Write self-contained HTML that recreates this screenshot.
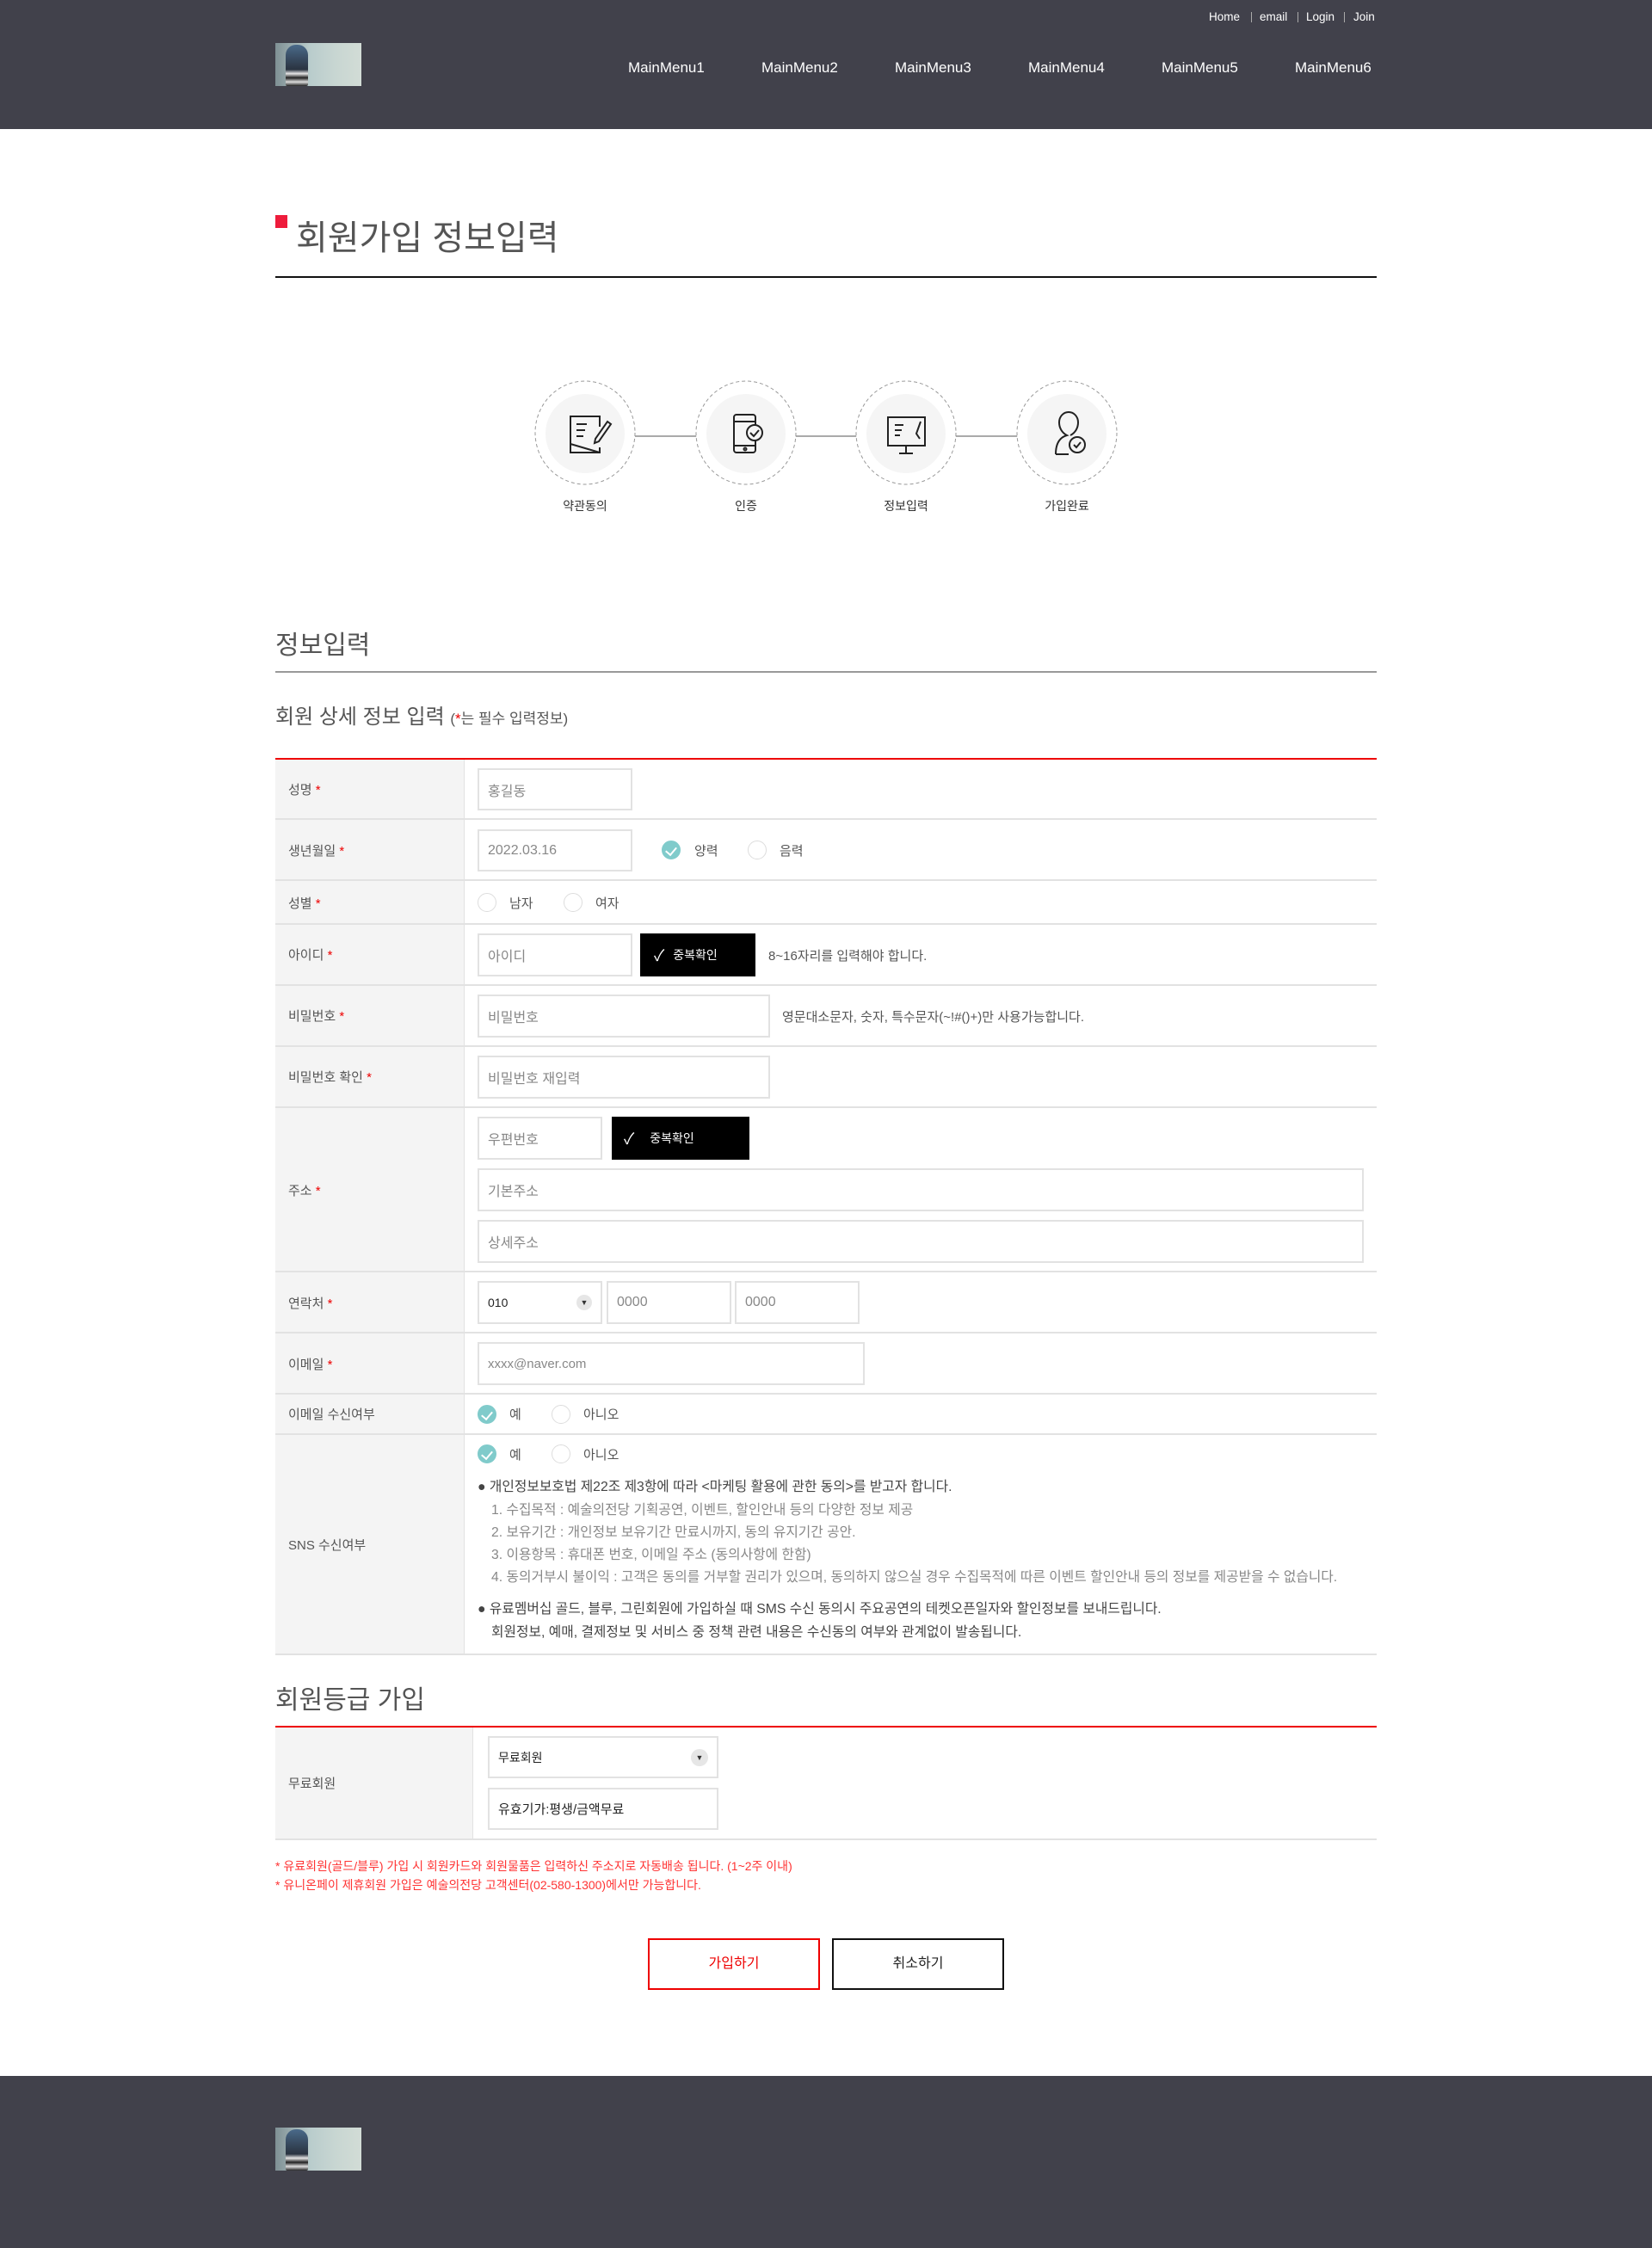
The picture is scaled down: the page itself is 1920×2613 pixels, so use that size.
<!DOCTYPE html>
<html><head><meta charset="utf-8">
<style>
*{margin:0;padding:0;box-sizing:border-box}
body{width:1920px;height:2613px;position:relative;background:#fff;font-family:"Liberation Sans","Noto Sans CJK KR",sans-serif;color:#555;overflow:hidden}
.a{position:absolute}
.hdr{left:0;top:0;width:1920px;height:150px;background:#41414b}
.logo{width:100px;height:50px;background:linear-gradient(90deg,#7f9094 0%,#b9cccc 40%,#c8d6d2 70%,#d2dcd6 100%);overflow:hidden}
.logo i{position:absolute;left:12px;top:2px;width:26px;height:48px;background:linear-gradient(#4a6a8a,#2a3340 60%,#e6e6e6 70%,#222 80%,#ddd 90%,#222);border-radius:12px 12px 2px 2px}
.top{top:12px;font-size:13.5px;color:#fff}
.menu{top:69px;font-size:17px;color:#fff}
.lbl{font-size:15px;color:#555}
.req{color:#e00}
.row{left:320px;width:1280px;border-bottom:2px solid #e2e2e2}
.lc{left:320px;width:220px;background:#f4f4f4;border-right:1px solid #e2e2e2}
.in{border:2px solid #e2e2e2;background:#fff;font-size:16px;color:#888;padding-left:10px;display:flex;align-items:center}
.btnb{background:#000;color:#fff;font-size:14px;display:flex;align-items:center}
.rad{width:22px;height:22px;border-radius:50%;border:1px solid #ddd;background:#fff}
.rad.on{background:#80cbcb;border-color:#80cbcb}
.rad.on:after{content:"";position:absolute;left:6px;top:4px;width:6px;height:10px;border:solid #fff;border-width:0 2px 2px 0;transform:rotate(40deg)}
.t15{font-size:15px;color:#555}
.sns{font-size:15.75px;line-height:26px}
.gr{color:#888}
</style></head><body>
<div class="a hdr"></div>
<div class="a logo" style="left:320px;top:50px"><i></i></div>
<div class="a top" style="left:1405px">Home</div>
<div class="a" style="left:1454px;top:14px;width:1px;height:12px;background:#aaa"></div>
<div class="a top" style="left:1464px">email</div>
<div class="a" style="left:1508px;top:14px;width:1px;height:12px;background:#aaa"></div>
<div class="a top" style="left:1518px">Login</div>
<div class="a" style="left:1562px;top:14px;width:1px;height:12px;background:#aaa"></div>
<div class="a top" style="left:1573px">Join</div>
<div class="a menu" style="left:730px">MainMenu1</div>
<div class="a menu" style="left:885px">MainMenu2</div>
<div class="a menu" style="left:1040px">MainMenu3</div>
<div class="a menu" style="left:1195px">MainMenu4</div>
<div class="a menu" style="left:1350px">MainMenu5</div>
<div class="a menu" style="left:1505px">MainMenu6</div>

<div class="a" style="left:320px;top:250px;width:14px;height:15px;background:#ee1c3c"></div>
<div class="a" style="left:344px;top:255px;font-size:40px;color:#555;line-height:44px">회원가입 정보입력</div>
<div class="a" style="left:320px;top:321px;width:1280px;height:2px;background:#111"></div>

<!-- steps -->
<div class="a" style="left:738px;top:506px;width:518px;height:2px;background:#aaa"></div>
<svg class="a" style="left:600px;top:430px" width="720" height="180" viewBox="0 0 720 180">
 <g fill="none" stroke="#999" stroke-dasharray="4 3">
  <ellipse cx="80" cy="73" rx="58" ry="60" fill="#fff"/><ellipse cx="267" cy="73" rx="58" ry="60" fill="#fff"/><ellipse cx="453" cy="73" rx="58" ry="60" fill="#fff"/><ellipse cx="640" cy="73" rx="58" ry="60" fill="#fff"/>
 </g>
 <g fill="#f5f5f5"><ellipse cx="80" cy="74" rx="46" ry="46"/><ellipse cx="267" cy="74" rx="46" ry="46"/><ellipse cx="453" cy="74" rx="46" ry="46"/><ellipse cx="640" cy="74" rx="46" ry="46"/></g>
 <g fill="none" stroke="#222" stroke-width="2">
  <path d="M97 66V54H63v42h34V90M63 86l34 10M70 63h12M70 70h10M70 77h8M92 80l14-20 4 3-14 20-5 2z"/>
  <rect x="253" y="52" width="25" height="44" rx="3"/><path d="M253 88h25M253 60h25"/><circle cx="266" cy="92" r="1.5"/><circle cx="277" cy="73" r="9" fill="#f5f5f5"/><path d="M272 73l4 4 6-7"/>
  <rect x="432" y="55" width="43" height="33"/><path d="M453 88v9M445 97h16M440 64h10M440 70h8M440 76h6M470 60l-5 14 4 6"/>
  <path d="M627 98c0-14 6-20 13-22-6-3-9-9-9-15 0-7 5-12 11-12s11 5 11 12c0 6-3 12-9 15"/><path d="M627 98h15"/><circle cx="652" cy="87" r="9"/><path d="M648 87l3 3 5-6"/>
 </g>
 <g font-size="14" fill="#333" text-anchor="middle" font-family="Liberation Sans,Noto Sans CJK KR,sans-serif"><text x="80" y="163">약관동의</text><text x="267" y="163">인증</text><text x="453" y="163">정보입력</text><text x="640" y="163">가입완료</text></g>
</svg>

<div class="a" style="left:320px;top:725px;font-size:30px;color:#555">정보입력</div>
<div class="a" style="left:320px;top:780px;width:1280px;height:2px;background:#999"></div>
<div class="a" style="left:320px;top:813px;font-size:24px;color:#555">회원 상세 정보 입력 <span style="font-size:17px">(<span class="req">*</span>는 필수 입력정보)</span></div>
<div class="a" style="left:320px;top:881px;width:1280px;height:2px;background:#e00"></div>

<!-- rows -->
<div class="a lc" style="top:883px;height:1040px"></div>
<div class="a row" style="top:883px;height:70px"></div>
<div class="a row" style="top:953px;height:71px"></div>
<div class="a row" style="top:1024px;height:51px"></div>
<div class="a row" style="top:1075px;height:71px"></div>
<div class="a row" style="top:1146px;height:71px"></div>
<div class="a row" style="top:1217px;height:71px"></div>
<div class="a row" style="top:1288px;height:191px"></div>
<div class="a row" style="top:1479px;height:71px"></div>
<div class="a row" style="top:1550px;height:71px"></div>
<div class="a row" style="top:1621px;height:47px"></div>
<div class="a row" style="top:1668px;height:256px"></div>

<div class="a lbl" style="left:335px;top:907px">성명 <span class="req">*</span></div>
<div class="a in" style="left:555px;top:893px;width:180px;height:49px">홍길동</div>

<div class="a lbl" style="left:335px;top:978px">생년월일 <span class="req">*</span></div>
<div class="a in" style="left:555px;top:964px;width:180px;height:49px">2022.03.16</div>
<div class="a rad on" style="left:769px;top:977px"></div><div class="a t15" style="left:807px;top:978px">양력</div>
<div class="a rad" style="left:869px;top:977px"></div><div class="a t15" style="left:906px;top:978px">음력</div>

<div class="a lbl" style="left:335px;top:1039px">성별 <span class="req">*</span></div>
<div class="a rad" style="left:555px;top:1038px"></div><div class="a t15" style="left:592px;top:1039px">남자</div>
<div class="a rad" style="left:655px;top:1038px"></div><div class="a t15" style="left:692px;top:1039px">여자</div>

<div class="a lbl" style="left:335px;top:1099px">아이디 <span class="req">*</span></div>
<div class="a in" style="left:555px;top:1085px;width:180px;height:50px">아이디</div>
<div class="a btnb" style="left:744px;top:1085px;width:134px;height:50px"><span style="margin-left:16px;font-size:18px">✓</span><span style="margin-left:10px">중복확인</span></div>
<div class="a t15" style="left:893px;top:1100px">8~16자리를 입력해야 합니다.</div>

<div class="a lbl" style="left:335px;top:1170px">비밀번호 <span class="req">*</span></div>
<div class="a in" style="left:555px;top:1156px;width:340px;height:50px">비밀번호</div>
<div class="a t15" style="left:909px;top:1171px">영문대소문자, 숫자, 특수문자(~!#()+)만 사용가능합니다.</div>

<div class="a lbl" style="left:335px;top:1241px">비밀번호 확인 <span class="req">*</span></div>
<div class="a in" style="left:555px;top:1227px;width:340px;height:50px">비밀번호 재입력</div>

<div class="a lbl" style="left:335px;top:1373px">주소 <span class="req">*</span></div>
<div class="a in" style="left:555px;top:1298px;width:145px;height:50px">우편번호</div>
<div class="a btnb" style="left:711px;top:1298px;width:160px;height:50px"><span style="margin-left:14px;font-size:18px">✓</span><span style="margin-left:18px">중복확인</span></div>
<div class="a in" style="left:555px;top:1358px;width:1030px;height:50px">기본주소</div>
<div class="a in" style="left:555px;top:1418px;width:1030px;height:50px">상세주소</div>

<div class="a lbl" style="left:335px;top:1504px">연락처 <span class="req">*</span></div>
<div class="a in" style="left:555px;top:1489px;width:145px;height:50px;color:#222;font-size:14px">010<span style="position:absolute;right:10px;top:14px;width:18px;height:18px;border-radius:50%;background:#e6e6e6;font-size:9px;text-align:center;line-height:18px;color:#333">▼</span></div>
<div class="a in" style="left:705px;top:1489px;width:145px;height:50px">0000</div>
<div class="a in" style="left:854px;top:1489px;width:145px;height:50px">0000</div>

<div class="a lbl" style="left:335px;top:1575px">이메일 <span class="req">*</span></div>
<div class="a in" style="left:555px;top:1560px;width:450px;height:50px;font-size:15px">xxxx@naver.com</div>

<div class="a lbl" style="left:335px;top:1633px">이메일 수신여부</div>
<div class="a rad on" style="left:555px;top:1633px"></div><div class="a t15" style="left:592px;top:1633px">예</div>
<div class="a rad" style="left:641px;top:1633px"></div><div class="a t15" style="left:678px;top:1633px">아니오</div>

<div class="a lbl" style="left:335px;top:1785px">SNS 수신여부</div>
<div class="a rad on" style="left:555px;top:1679px"></div><div class="a t15" style="left:592px;top:1680px">예</div>
<div class="a rad" style="left:641px;top:1679px"></div><div class="a t15" style="left:678px;top:1680px">아니오</div>
<div class="a sns" style="left:555px;top:1716px;color:#444">● 개인정보보호법 제22조 제3항에 따라 &lt;마케팅 활용에 관한 동의&gt;를 받고자 합니다.</div>
<div class="a sns gr" style="left:571px;top:1743px">1. 수집목적 : 예술의전당 기획공연, 이벤트, 할인안내 등의 다양한 정보 제공<br>2. 보유기간 : 개인정보 보유기간 만료시까지, 동의 유지기간 공안.<br>3. 이용항목 : 휴대폰 번호, 이메일 주소 (동의사항에 한함)<br>4. 동의거부시 불이익 : 고객은 동의를 거부할 권리가 있으며, 동의하지 않으실 경우 수집목적에 따른 이벤트 할인안내 등의 정보를 제공받을 수 없습니다.</div>
<div class="a sns" style="left:555px;top:1858px;color:#444">● 유료멤버십 골드, 블루, 그린회원에 가입하실 때 SMS 수신 동의시 주요공연의 테켓오픈일자와 할인정보를 보내드립니다.</div>
<div class="a sns" style="left:571px;top:1885px;color:#444">회원정보, 예매, 결제정보 및 서비스 중 정책 관련 내용은 수신동의 여부와 관계없이 발송됩니다.</div>

<div class="a" style="left:320px;top:1951px;font-size:30px;color:#555">회원등급 가입</div>
<div class="a" style="left:320px;top:2006px;width:1280px;height:2px;background:#e00"></div>
<div class="a" style="left:320px;top:2008px;width:230px;height:130px;background:#f4f4f4;border-right:1px solid #e2e2e2"></div>
<div class="a" style="left:320px;top:2137px;width:1280px;height:2px;background:#e2e2e2"></div>
<div class="a lbl" style="left:335px;top:2062px">무료회원</div>
<div class="a in" style="left:567px;top:2018px;width:268px;height:49px;color:#222;font-size:14px">무료회원<span style="position:absolute;right:10px;top:13px;width:20px;height:20px;border-radius:50%;background:#e6e6e6;font-size:9px;text-align:center;line-height:20px;color:#333">▼</span></div>
<div class="a in" style="left:567px;top:2078px;width:268px;height:49px;color:#222;font-size:15px">유효기가:평생/금액무료</div>

<div class="a" style="left:320px;top:2158px;font-size:14px;color:#f33;line-height:22px">* 유료회원(골드/블루) 가입 시 회원카드와 회원물품은 입력하신 주소지로 자동배송 됩니다. (1~2주 이내)<br>* 유니온페이 제휴회원 가입은 예술의전당 고객센터(02-580-1300)에서만 가능합니다.</div>

<div class="a" style="left:753px;top:2253px;width:200px;height:60px;border:2px solid #e00;color:#e00;font-size:16px;text-align:center;line-height:56px">가입하기</div>
<div class="a" style="left:967px;top:2253px;width:200px;height:60px;border:2px solid #111;color:#222;font-size:16px;text-align:center;line-height:56px">취소하기</div>

<div class="a" style="left:0;top:2413px;width:1920px;height:200px;background:#41414b"></div>
<div class="a logo" style="left:320px;top:2473px"><i></i></div>
</body></html>
